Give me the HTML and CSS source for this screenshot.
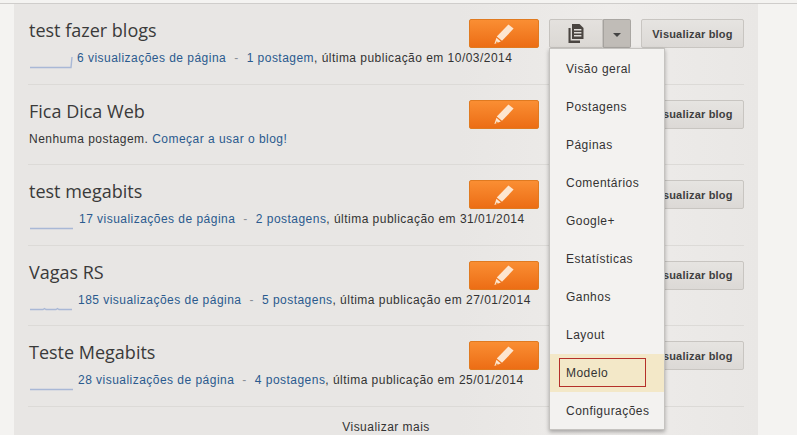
FILE: index.html
```html
<!DOCTYPE html>
<html lang="pt">
<head>
<meta charset="utf-8">
<title>Blogs</title>
<link rel="stylesheet" href="styles.css">
</head>
<body>
<svg class="defs" width="0" height="0" aria-hidden="true">
  <symbol id="pencil" viewBox="0 0 20 20">
    <path fill="#fde6d0" d="M14.4 0.6 19.6 4.6 8 16.8 2.8 12.6Z"/>
    <path fill="#fde6d0" d="M2.4 13.8 6.8 17.4 0.4 20Z"/>
    <path fill="#f2801f" d="M2.8 17.2 4.2 18.4 1.6 19.2Z"/>
  </symbol>
</svg>
<main class="panel">
  <section class="row">
    <div class="info">
      <h2 class="name">test fazer blogs</h2>
      <p class="meta">
        <svg class="spark" width="44" height="12" viewBox="0 0 44 12"><path d="M1 10.5H42L43 0" fill="none" stroke="#a9b8d6" stroke-width="1.4"/></svg>
        <span><a class="lnk">6 visualizações de página</a><span class="dash">-</span><a class="lnk">1 postagem</a>, última publicação em 10/03/2014</span>
      </p>
    </div>
    <div class="actions">
      <button class="edit"><svg width="20" height="20"><use href="#pencil"/></svg></button>
      <div class="split">
        <button class="split-main">
          <svg width="16" height="19" viewBox="0 0 16 19"><path fill="#4a4541" d="M4 0H11.5L15.5 4V15H4ZM6 5V6.4H13.4V5ZM6 8V9.4H13.4V8ZM6 11V12.4H13.4V11ZM0.5 4H2.6V16.6H12V19H0.5Z" fill-rule="evenodd"/></svg>
        </button>
        <button class="split-caret"><span class="caret"></span></button>
      </div>
      <button class="view">Visualizar blog</button>
    </div>
  </section>
  <section class="row">
    <div class="info">
      <h2 class="name">Fica Dica Web</h2>
      <p class="meta"><span>Nenhuma postagem. <a class="lnk">Começar a usar o blog!</a></span></p>
    </div>
    <div class="actions">
      <button class="edit"><svg width="20" height="20"><use href="#pencil"/></svg></button>
      <div class="split idle"></div>
      <button class="view">Visualizar blog</button>
    </div>
  </section>
  <section class="row">
    <div class="info">
      <h2 class="name">test megabits</h2>
      <p class="meta">
        <svg class="spark" width="46" height="12" viewBox="0 0 46 12"><path d="M1 10.5H44" fill="none" stroke="#a9b8d6" stroke-width="1.4"/></svg>
        <span><a class="lnk">17 visualizações de página</a><span class="dash">-</span><a class="lnk">2 postagens</a>, última publicação em 31/01/2014</span>
      </p>
    </div>
    <div class="actions">
      <button class="edit"><svg width="20" height="20"><use href="#pencil"/></svg></button>
      <div class="split idle"></div>
      <button class="view">Visualizar blog</button>
    </div>
  </section>
  <section class="row">
    <div class="info">
      <h2 class="name">Vagas RS</h2>
      <p class="meta">
        <svg class="spark" width="45" height="12" viewBox="0 0 45 12"><path d="M1 10.5H14L15.5 9.5 17 10.5H27L28.5 9.5 30 10.5H43" fill="none" stroke="#a9b8d6" stroke-width="1.4"/></svg>
        <span><a class="lnk">185 visualizações de página</a><span class="dash">-</span><a class="lnk">5 postagens</a>, última publicação em 27/01/2014</span>
      </p>
    </div>
    <div class="actions">
      <button class="edit"><svg width="20" height="20"><use href="#pencil"/></svg></button>
      <div class="split idle"></div>
      <button class="view">Visualizar blog</button>
    </div>
  </section>
  <section class="row">
    <div class="info">
      <h2 class="name">Teste Megabits</h2>
      <p class="meta">
        <svg class="spark" width="45" height="12" viewBox="0 0 45 12"><path d="M1 10.5H44" fill="none" stroke="#a9b8d6" stroke-width="1.6"/></svg>
        <span><a class="lnk">28 visualizações de página</a><span class="dash">-</span><a class="lnk">4 postagens</a>, última publicação em 25/01/2014</span>
      </p>
    </div>
    <div class="actions">
      <button class="edit"><svg width="20" height="20"><use href="#pencil"/></svg></button>
      <div class="split idle"></div>
      <button class="view">Visualizar blog</button>
    </div>
  </section>
  <div class="more">Visualizar mais</div>
</main>
<ul class="menu">
  <li class="item">Visão geral</li>
  <li class="item">Postagens</li>
  <li class="item">Páginas</li>
  <li class="item">Comentários</li>
  <li class="item">Google+</li>
  <li class="item">Estatísticas</li>
  <li class="item">Ganhos</li>
  <li class="item">Layout</li>
  <li class="item active"><span class="mark">Modelo</span></li>
  <li class="item">Configurações</li>
</ul>
</body>
</html>
```

FILE: styles.css
```css
* { box-sizing: border-box; }
html, body { height: 100%; }
body {
  margin: 0;
  height: 435px;
  overflow: hidden;
  position: relative;
  background: #f4f3f1;
  font-family: "Liberation Sans", Arial, sans-serif;
  color: #2a2a2a;
  padding-top: 4px;
}
body::before {
  content: "";
  position: absolute;
  left: 0; right: 0; top: 3px;
  height: 1px;
  background: #cfcdcb;
}
.defs { position: absolute; }
.panel {
  width: 744px;
  margin-left: 14px;
  height: 431px;
  padding: 0 14px;
  background: linear-gradient(90deg, #e8e6e4 0, #e8e6e4 60%, #eeecea 80%, #e9e7e5 100%);
}
.row {
  height: 80.5px;
  display: flex;
  border-bottom: 1px solid #dcdad7;
  padding-left: 1px;
}
.info { padding-top: 14px; flex: 1; min-width: 0; }
.name {
  margin: 0;
  font: 400 18px/24px "Open Sans", sans-serif;
  color: #3a3a3a;
}
.meta {
  margin: 8px 0 0;
  display: flex;
  align-items: flex-start;
  font-size: 12px;
  line-height: 16px;
  letter-spacing: .47px;
  color: #333;
  white-space: pre;
}
.spark { flex: none; margin: 7px 4px 0 0; }
.lnk { color: #2a5a8e; }
.dash { color: #8a8f96; margin: 0 8px; }
.actions {
  display: flex;
  flex: none;
  align-items: flex-start;
  gap: 10px;
  padding-top: 15px;
}
.actions button { font-family: inherit; cursor: pointer; padding: 0; }
.edit {
  width: 70px;
  height: 29px;
  display: flex;
  align-items: center;
  justify-content: center;
  border: 1px solid #e07a20;
  border-radius: 2px;
  background: linear-gradient(#fa8e33, #ec6d15);
}
.split { display: flex; width: 82px; height: 29px; }
.split.idle { visibility: hidden; }
.split-main {
  width: 54px;
  display: flex;
  align-items: center;
  justify-content: center;
  border: 1px solid #c6c3bf;
  border-radius: 2px 0 0 2px;
  background: linear-gradient(#e4e1de, #dbd8d4);
}
.split-caret {
  width: 28px;
  display: flex;
  align-items: center;
  justify-content: center;
  border: 1px solid #a9a6a2;
  border-left-color: #a5a29e;
  border-radius: 0 2px 2px 0;
  background: #c0bcb7;
}
.caret {
  width: 0;
  height: 0;
  margin-top: 2px;
  border-left: 4px solid transparent;
  border-right: 4px solid transparent;
  border-top: 4px solid #444;
}
.view {
  width: 103px;
  height: 29px;
  border: 1px solid #c8c5c1;
  border-radius: 2px;
  background: linear-gradient(#e6e4e1, #dcd9d6);
  font-size: 11px;
  font-weight: 700;
  letter-spacing: .2px;
  color: #3f3f3f;
}
.more {
  text-align: center;
  font-size: 12px;
  line-height: 16px;
  letter-spacing: .47px;
  padding-top: 12px;
  color: #333;
}
/* dropdown lying over the rows */
.menu {
  position: absolute;
  left: 549px;
  top: 48px;
  width: 116px;
  margin: 0;
  padding: 1px 0 0;
  list-style: none;
  height: 382px;
  background: #f3f2f0;
  border: 1px solid #c5c3c0;
  box-shadow: 0 2px 4px rgba(0, 0, 0, .3);
  font-size: 12px;
  letter-spacing: .47px;
  color: #333;
}
.item {
  height: 38px;
  display: flex;
  align-items: center;
  padding-left: 16px;
}
.active { background: #f3e8c8; padding-left: 9px; }
.mark {
  width: 87px;
  height: 29px;
  display: flex;
  align-items: center;
  padding-left: 6px;
  border: 1px solid #b5302a;
  margin-bottom: 1px;
}
```
